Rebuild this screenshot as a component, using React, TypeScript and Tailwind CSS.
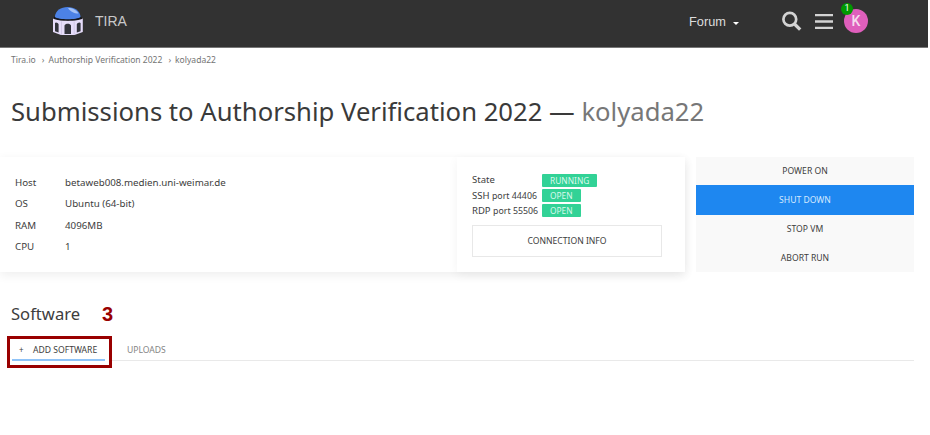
import clsx from "clsx"

const vmInfo = [
  { label: "Host", value: "betaweb008.medien.uni-weimar.de" },
  { label: "OS", value: "Ubuntu (64-bit)" },
  { label: "RAM", value: "4096MB" },
  { label: "CPU", value: "1" },
]

const actions = ["POWER ON", "SHUT DOWN", "STOP VM", "ABORT RUN"]

function Logo() {
  return (
    <svg width="32" height="30" viewBox="0 0 32 30">
      <path d="M1 12.500 L9 14.500 H22.500 L30.800 12.500 V26 L22.500 29 H9 L1 26 Z" fill="#e6ddfa" />
      <path d="M2.200 10.500 H29 L30.300 12.800 C25 15.300 7 15.300 1.500 12.800 Z" fill="#15161c" />
      <path d="M2.800 11 C3.300 4.500 9 1 15.600 1 S28 4.500 28.600 11 C25 14 6.500 14 2.800 11Z" fill="#4c82e6" />
      <path d="M16 2 C20 1.800 24.500 3.800 26.500 7.500 C22 7.500 18 5.500 16 2Z" fill="#a3c1f5" />
      <path d="M3 17 C3.600 15.800 6 16.500 6.600 18.300 V26.500 L3 25.300Z M12.500 28 V19.500 C13.300 17 18.200 17 19 19.500 V28Z M24.800 26.500 V18.300 C25.400 16.500 27.800 15.800 28.600 17 V25.300Z" fill="#33343c" />
      <path d="M9.500 15.500 V28.800 M22.200 15.500 V28.800" stroke="#c5bbdc" strokeWidth="0.6" />
    </svg>
  )
}

function Header() {
  return (
    <header className="flex h-[47px] w-[928px] box-content items-start border-b border-[#777] bg-[#323232] font-['Liberation_Sans',sans-serif] text-[#c9c9c9]">
      <div className="ml-[52px] mt-[6px]">
        <Logo />
      </div>
      <span className="ml-[11px] mt-[11px] text-[14px] leading-5">TIRA</span>
      <div className="ml-auto mt-[12px] flex items-center text-[12.800px] leading-5 text-[#dcdcdc]">
        Forum
        <span className="ml-[7px] mt-0.5 border-x-[3px] border-t-[3px] border-x-transparent border-t-white" />
      </div>
      <svg className="ml-[43px] mt-[11px]" width="21" height="21" viewBox="0 0 21 21" fill="none" stroke="#d3d3d3">
        <circle cx="7.800" cy="8.300" r="6.400" strokeWidth="2.700" />
        <path d="M12.500 13 L18.200 18.700" strokeWidth="3.300" />
      </svg>
      <svg className="ml-[12px] mt-[13px]" width="18" height="17" viewBox="0 0 18 17" stroke="#d3d3d3" strokeWidth="2.300">
        <path d="M0 2.100 H18 M0 8.500 H18 M0 14.800 H18" />
      </svg>
      <div className="relative ml-[11px] mr-[60px] mt-[9px] flex size-[24px] items-center justify-center rounded-full bg-[#df5fbc] font-[Roboto,sans-serif] text-[14px] font-medium text-[#f5dcee]">
        K
        <span className="absolute -left-[3px] -top-[6px] flex size-[12px] items-center justify-center rounded-full bg-[#009900] text-[9px] font-normal text-white">
          1
        </span>
      </div>
    </header>
  )
}

function Badge({ children }: { children: string }) {
  return (
    <span className="h-[13px] rounded-[1px] bg-[#32d296] px-2 text-[8.400px] leading-[14px] text-[#d9f8ec]">
      {children}
    </span>
  )
}

function StatePanel() {
  return (
    <section className="h-[115px] w-[228px] bg-white pl-[15px] pt-[15.500px] shadow-[0_3px_10px_rgba(0,0,0,0.05)]">
      <div className="grid grid-cols-[70px_auto] justify-start text-[9.500px] leading-[15.300px]">
        <div className="h-[15.300px] leading-[14px]">State</div>
        <div className="flex h-[15.300px] items-center"><Badge>RUNNING</Badge></div>
        <div className="h-[15.300px] whitespace-nowrap">SSH <span className="text-[8.800px]">port 44406</span></div>
        <div className="flex h-[15.300px] items-center"><Badge>OPEN</Badge></div>
        <div className="h-[15.300px] whitespace-nowrap">RDP <span className="text-[8.800px]">port 55506</span></div>
        <div className="flex h-[15.300px] items-center"><Badge>OPEN</Badge></div>
      </div>
      <button className="mt-[6.600px] block h-[32px] w-[190px] border border-[#e8e8e8] pt-px text-[8.600px]">
        CONNECTION INFO
      </button>
    </section>
  )
}

export default function App() {
  return (
    <div className="h-[435px] w-[930px] overflow-hidden bg-white font-['Noto_Sans',sans-serif] text-[#3d3d3d]">
      <Header />
      <nav className="flex pl-[11px] pt-[5px] text-[8.550px] leading-[14px] text-[#747474]">
        <span>Tira.io</span>
        <span className="ml-[6px] mr-[4px]">›</span>
        <span>Authorship Verification 2022</span>
        <span className="ml-[6px] mr-[4px]">›</span>
        <span>kolyada22</span>
      </nav>
      <h1 className="mt-[25px] whitespace-nowrap pl-[11px] text-[25.660px] leading-10 text-[#3a3a3a]">
        Submissions to Authorship Verification 2022 — <span className="text-[#777]">kolyada22</span>
      </h1>

      <div className="mt-[25px] flex">
        <div className="flex shadow-[0_3px_10px_rgba(0,0,0,0.07)]">
          <dl className="h-[115px] w-[457px] pl-[15px] pt-[15px] text-[9.750px] leading-[21.300px]">
            {vmInfo.map((item) => (
              <div key={item.label} className="flex">
                <dt className="w-[50px]">{item.label}</dt>
                <dd>{item.value}</dd>
              </div>
            ))}
          </dl>
          <StatePanel />
        </div>
        <div className="ml-[11px] flex h-[115px] w-[218px] flex-col bg-[#f9f9f9] text-[8.600px]">
          {actions.map((action) => (
            <button
              key={action}
              className={clsx(
                "w-full",
                action === "SHUT DOWN" ? "h-[30px] bg-[#1e87f0] pt-px text-[#d5e9ff]" : "h-[28.500px] pt-px"
              )}
            >
              {action}
            </button>
          ))}
        </div>
      </div>

      <div className="mt-[29px] flex h-[26px] items-center pl-[11px]">
        <h2 className="text-[16.600px]">Software</h2>
        <span className="ml-[22px] font-['Liberation_Sans',sans-serif] text-[20px] font-bold text-[#990000]">3</span>
      </div>
      <div className="mt-[9px] flex h-[32px] pl-[7px] text-[8.600px]">
        <button className="flex h-[32px] w-[105px] flex-col border-[3px] border-[#990000] px-[2px]">
          <span className="flex h-[22px] w-[93px] items-center border-b-2 border-[#8fc3f8] pl-[7px] pt-[2px]">
            <span className="w-[14px] text-left text-[8px]">+</span>
            ADD SOFTWARE
          </span>
        </button>
        <div className="mt-[3px] flex h-[22px] w-[802px] items-center border-b border-[#e9e9e9] pl-[15px] pt-[2px] text-[#858585]">
          UPLOADS
        </div>
      </div>
    </div>
  )
}
